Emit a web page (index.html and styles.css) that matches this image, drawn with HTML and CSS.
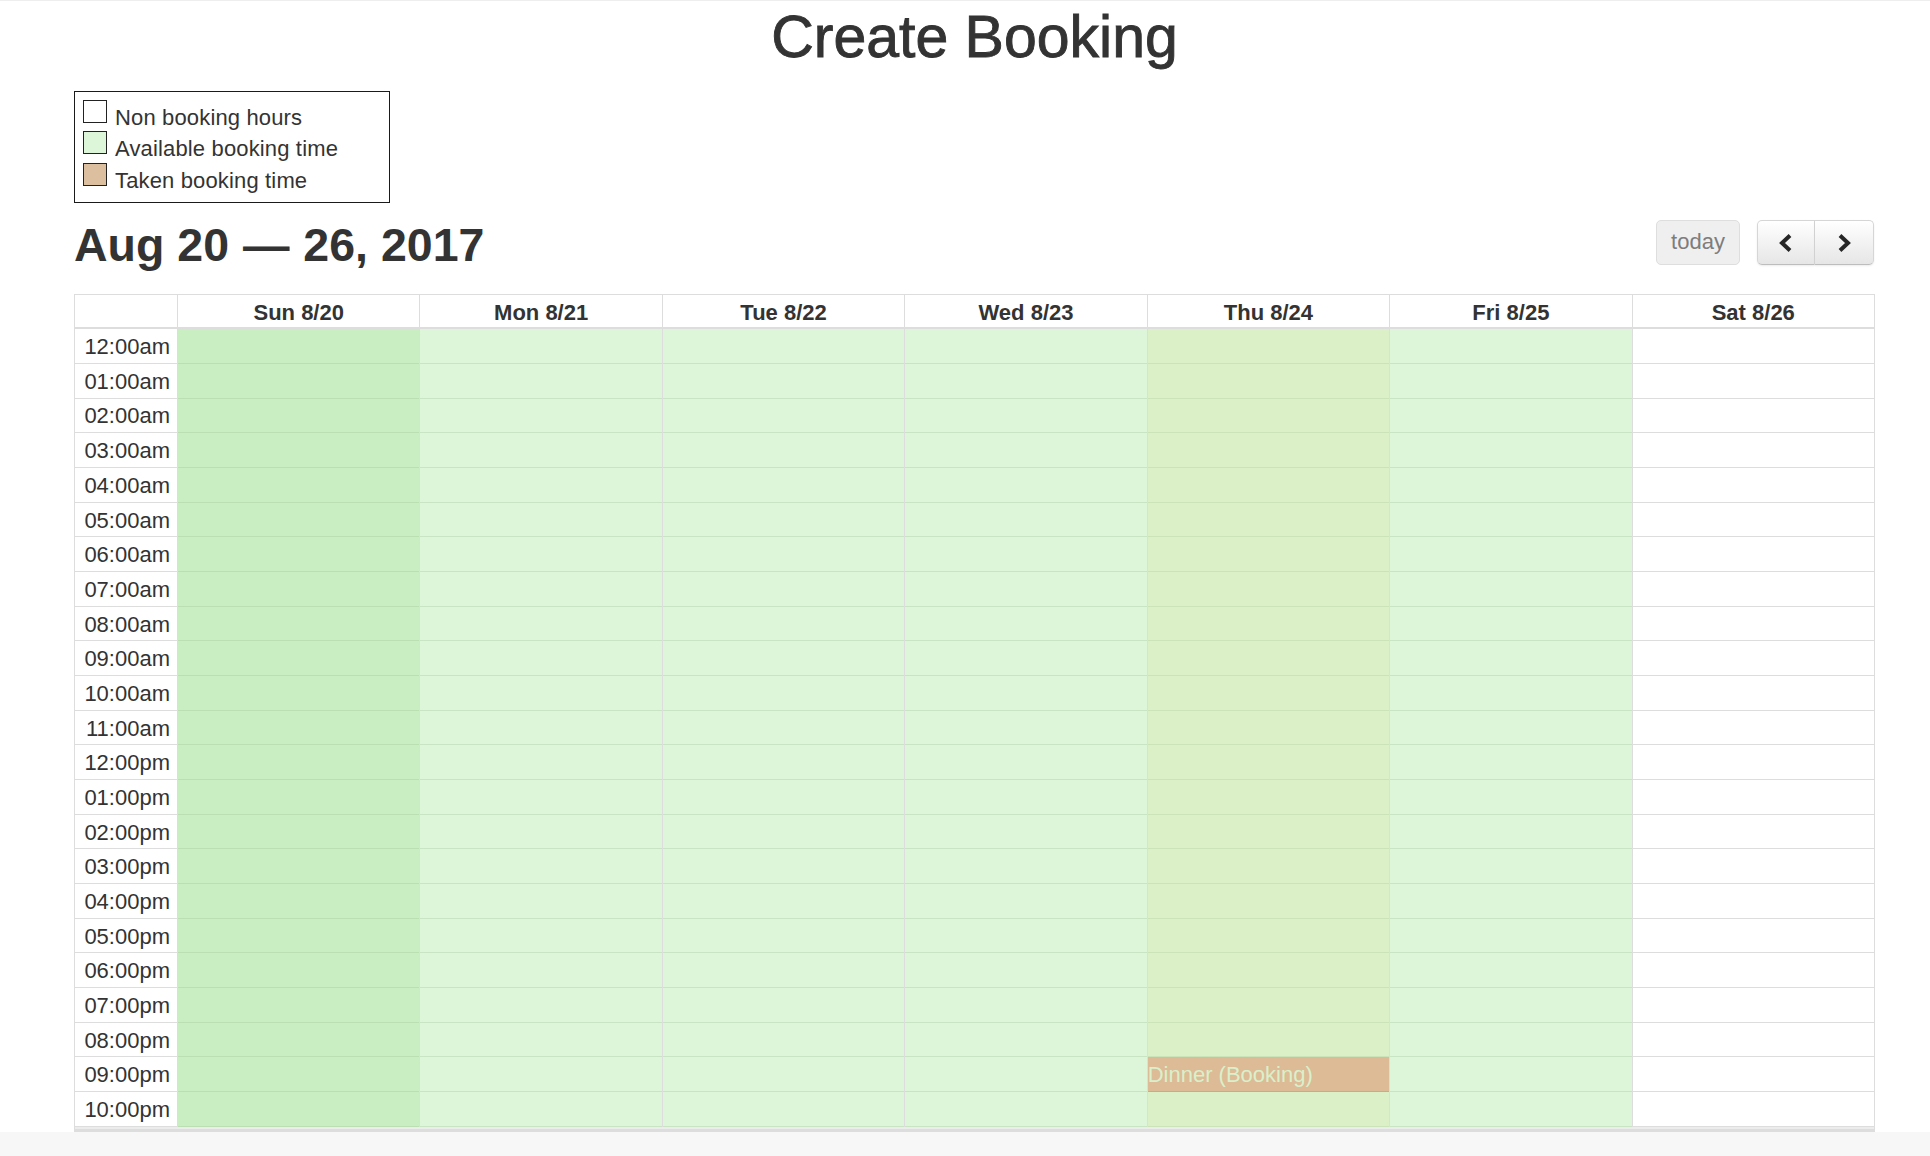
FILE: index.html
```html
<!DOCTYPE html>
<html lang="en">
<head>
<meta charset="utf-8">
<title>Create Booking</title>
<link rel="stylesheet" href="styles.css">
</head>
<body>
<div class="page">
  <main class="content">
    <h1 class="title">Create Booking</h1>

    <div class="legend">
      <div class="legend-item"><span class="swatch swatch-none"></span>Non booking hours</div>
      <div class="legend-item"><span class="swatch swatch-available"></span>Available booking time</div>
      <div class="legend-item"><span class="swatch swatch-taken"></span>Taken booking time</div>
    </div>

    <div class="toolbar">
      <h2 class="range">Aug 20 <span class="dash">—</span> 26, 2017</h2>
      <div class="toolbar-right">
        <button class="btn btn-today" type="button" disabled>today</button>
        <div class="btn-group">
          <button class="btn btn-nav btn-prev" type="button" aria-label="prev">
            <svg class="chev" width="18" height="20" viewBox="0 0 18 20"><polyline points="13,2.5 5,10 13,17.5" /></svg>
          </button>
          <button class="btn btn-nav btn-next" type="button" aria-label="next">
            <svg class="chev" width="18" height="20" viewBox="0 0 18 20"><polyline points="5,2.5 13,10 5,17.5" /></svg>
          </button>
        </div>
      </div>
    </div>

    <div class="calendar">
      <div class="cal-head">
        <div class="head-cell head-axis"></div>
        <div class="head-cell">Sun 8/20</div>
        <div class="head-cell">Mon 8/21</div>
        <div class="head-cell">Tue 8/22</div>
        <div class="head-cell">Wed 8/23</div>
        <div class="head-cell">Thu 8/24</div>
        <div class="head-cell">Fri 8/25</div>
        <div class="head-cell">Sat 8/26</div>
      </div>
      <div class="cal-body">
        <div class="axis">
          <div class="slot">12:00am</div>
          <div class="slot">01:00am</div>
          <div class="slot">02:00am</div>
          <div class="slot">03:00am</div>
          <div class="slot">04:00am</div>
          <div class="slot">05:00am</div>
          <div class="slot">06:00am</div>
          <div class="slot">07:00am</div>
          <div class="slot">08:00am</div>
          <div class="slot">09:00am</div>
          <div class="slot">10:00am</div>
          <div class="slot">11:00am</div>
          <div class="slot">12:00pm</div>
          <div class="slot">01:00pm</div>
          <div class="slot">02:00pm</div>
          <div class="slot">03:00pm</div>
          <div class="slot">04:00pm</div>
          <div class="slot">05:00pm</div>
          <div class="slot">06:00pm</div>
          <div class="slot">07:00pm</div>
          <div class="slot">08:00pm</div>
          <div class="slot">09:00pm</div>
          <div class="slot">10:00pm</div>
        </div>

        <div class="day day-open day-double">
          <div class="slot"></div><div class="slot"></div><div class="slot"></div><div class="slot"></div><div class="slot"></div><div class="slot"></div>
          <div class="slot"></div><div class="slot"></div><div class="slot"></div><div class="slot"></div><div class="slot"></div><div class="slot"></div>
          <div class="slot"></div><div class="slot"></div><div class="slot"></div><div class="slot"></div><div class="slot"></div><div class="slot"></div>
          <div class="slot"></div><div class="slot"></div><div class="slot"></div><div class="slot"></div><div class="slot"></div>
        </div>

        <div class="day day-open">
          <div class="slot"></div><div class="slot"></div><div class="slot"></div><div class="slot"></div><div class="slot"></div><div class="slot"></div>
          <div class="slot"></div><div class="slot"></div><div class="slot"></div><div class="slot"></div><div class="slot"></div><div class="slot"></div>
          <div class="slot"></div><div class="slot"></div><div class="slot"></div><div class="slot"></div><div class="slot"></div><div class="slot"></div>
          <div class="slot"></div><div class="slot"></div><div class="slot"></div><div class="slot"></div><div class="slot"></div>
        </div>

        <div class="day day-open">
          <div class="slot"></div><div class="slot"></div><div class="slot"></div><div class="slot"></div><div class="slot"></div><div class="slot"></div>
          <div class="slot"></div><div class="slot"></div><div class="slot"></div><div class="slot"></div><div class="slot"></div><div class="slot"></div>
          <div class="slot"></div><div class="slot"></div><div class="slot"></div><div class="slot"></div><div class="slot"></div><div class="slot"></div>
          <div class="slot"></div><div class="slot"></div><div class="slot"></div><div class="slot"></div><div class="slot"></div>
        </div>

        <div class="day day-open">
          <div class="slot"></div><div class="slot"></div><div class="slot"></div><div class="slot"></div><div class="slot"></div><div class="slot"></div>
          <div class="slot"></div><div class="slot"></div><div class="slot"></div><div class="slot"></div><div class="slot"></div><div class="slot"></div>
          <div class="slot"></div><div class="slot"></div><div class="slot"></div><div class="slot"></div><div class="slot"></div><div class="slot"></div>
          <div class="slot"></div><div class="slot"></div><div class="slot"></div><div class="slot"></div><div class="slot"></div>
        </div>

        <div class="day day-open day-today">
          <div class="slot"></div><div class="slot"></div><div class="slot"></div><div class="slot"></div><div class="slot"></div><div class="slot"></div>
          <div class="slot"></div><div class="slot"></div><div class="slot"></div><div class="slot"></div><div class="slot"></div><div class="slot"></div>
          <div class="slot"></div><div class="slot"></div><div class="slot"></div><div class="slot"></div><div class="slot"></div><div class="slot"></div>
          <div class="slot"></div><div class="slot"></div><div class="slot"></div>
          <div class="slot slot-event"><span class="event-title">Dinner (Booking)</span></div>
          <div class="slot"></div>
        </div>

        <div class="day day-open">
          <div class="slot"></div><div class="slot"></div><div class="slot"></div><div class="slot"></div><div class="slot"></div><div class="slot"></div>
          <div class="slot"></div><div class="slot"></div><div class="slot"></div><div class="slot"></div><div class="slot"></div><div class="slot"></div>
          <div class="slot"></div><div class="slot"></div><div class="slot"></div><div class="slot"></div><div class="slot"></div><div class="slot"></div>
          <div class="slot"></div><div class="slot"></div><div class="slot"></div><div class="slot"></div><div class="slot"></div>
        </div>

        <div class="day day-closed">
          <div class="slot"></div><div class="slot"></div><div class="slot"></div><div class="slot"></div><div class="slot"></div><div class="slot"></div>
          <div class="slot"></div><div class="slot"></div><div class="slot"></div><div class="slot"></div><div class="slot"></div><div class="slot"></div>
          <div class="slot"></div><div class="slot"></div><div class="slot"></div><div class="slot"></div><div class="slot"></div><div class="slot"></div>
          <div class="slot"></div><div class="slot"></div><div class="slot"></div><div class="slot"></div><div class="slot"></div>
        </div>
      </div>
      <div class="cal-foot"></div>
    </div>
  </main>
  <footer class="bottom-bar"></footer>
</div>
</body>
</html>
```

FILE: styles.css
```css
* {
  box-sizing: border-box;
}

html, body {
  margin: 0;
  padding: 0;
  background: #ffffff;
}

body {
  font-family: "Liberation Sans", Arial, Helvetica, sans-serif;
  font-size: 22px;
  color: #333333;
}

.page {
  height: 1156px;
  display: flex;
  flex-direction: column;
  overflow: hidden;
  border-top: 1px solid #eeeeee;
}

.content {
  flex: 1;
  overflow: hidden;
  padding-left: 74px;
  width: 1875px;
}

.title {
  margin: 4px 0 0;
  font-size: 59px;
  line-height: 64px;
  font-weight: normal;
  text-align: center;
  color: #333333;
  -webkit-text-stroke: 0.9px #333333;
}

/* Legend */
.legend {
  margin-top: 22px;
  width: 316px;
  border: 1px solid #1a1a1a;
  padding: 10px 8px 6px 8px;
}

.legend-item {
  line-height: 31.43px;
  white-space: nowrap;
  letter-spacing: 0.15px;
}

.swatch {
  display: inline-block;
  width: 24px;
  height: 23px;
  border: 1px solid #222222;
  margin-right: 8px;
  vertical-align: baseline;
  position: relative;
  top: -2px;
}

.swatch-none { background: #ffffff; }
.swatch-available { background: #ddf5d9; }
.swatch-taken { background: #dcbf9f; }

/* Toolbar */
.toolbar {
  margin-top: 17px;
  display: flex;
  justify-content: space-between;
  align-items: flex-start;
  margin-bottom: 17px;
}

.range {
  margin: 0;
  font-size: 46.5px;
  line-height: 51px;
  height: 57px;
  font-weight: bold;
  color: #333333;
}

.range .dash {
  margin: 0 1px;
}

.toolbar-right {
  display: flex;
  gap: 17px;
  padding-right: 1px;
}

.btn {
  font-family: inherit;
  font-size: 22px;
  height: 45px;
  margin: 0;
  padding: 0;
  border: 1px solid;
  border-color: #d6d6d6 #d6d6d6 #bdbdbd;
  background: linear-gradient(to bottom, #ffffff 0%, #e6e6e6 100%);
  color: #333333;
  box-shadow: inset 0 1px 0 rgba(255, 255, 255, 0.2), 0 1px 2px rgba(0, 0, 0, 0.08);
  display: flex;
  align-items: center;
  justify-content: center;
}

.btn-today {
  width: 84px;
  border-radius: 5px;
  background: #efefef;
  border-color: #dedede;
  color: #7d7d7d;
  box-shadow: none;
  padding-bottom: 2px;
}

.btn-group {
  display: flex;
}

.btn-nav {
  width: 58px;
}

.btn-prev {
  border-radius: 5px 0 0 5px;
}

.btn-next {
  border-radius: 0 5px 5px 0;
  border-left: none;
  width: 59px;
}

.chev polyline {
  fill: none;
  stroke: #262626;
  stroke-width: 4;
  stroke-linejoin: miter;
  stroke-linecap: butt;
}

/* Calendar */
.calendar {
  width: 1801px;
  border: 1px solid #dddddd;
  border-bottom: none;
}

.cal-head,
.cal-body {
  display: grid;
  grid-template-columns: 102px repeat(7, 1fr);
}

.cal-head {
  border-bottom: 2px solid #dddddd;
}

.head-cell {
  height: 32px;
  line-height: 32px;
  text-align: center;
  font-weight: bold;
  font-size: 22px;
  color: #333333;
  border-left: 1px solid #dddddd;
  padding-top: 2px;
}

.head-cell.head-axis {
  border-left: none;
}

.slot {
  height: 34.68px;
  border-bottom: 1px solid #dddddd;
}

.axis .slot {
  display: flex;
  align-items: center;
  justify-content: flex-end;
  padding-right: 7px;
  padding-top: 2px;
  font-size: 22px;
  white-space: nowrap;
}

.day {
  border-left: 1px solid #dddddd;
}

.day-open {
  background: #ddf5d8;
}

.day-open .slot {
  border-bottom-color: #c8e4c2;
}

.day-double {
  background: #c8eec1;
}

.day-double .slot {
  border-bottom-color: #bbdfb3;
}

.day-today {
  background: #dbf0c6;
}

.day-today .slot {
  border-bottom-color: #cbe3b8;
}

.day-closed {
  background: #ffffff;
}

.day-closed .slot {
  border-bottom-color: #dddddd;
}

.day .slot.slot-event {
  background: #dcbb96;
  border-bottom-color: #cfa985;
  display: flex;
  align-items: center;
}

.event-title {
  color: #d9f0cb;
  font-size: 22px;
  white-space: nowrap;
  padding-top: 1px;
}

.cal-foot {
  height: 6px;
  border-top: 2px solid #ececec;
  background: #dddddd;
}

.bottom-bar {
  height: 24px;
  flex: none;
  background: #f7f7f7;
}
```
